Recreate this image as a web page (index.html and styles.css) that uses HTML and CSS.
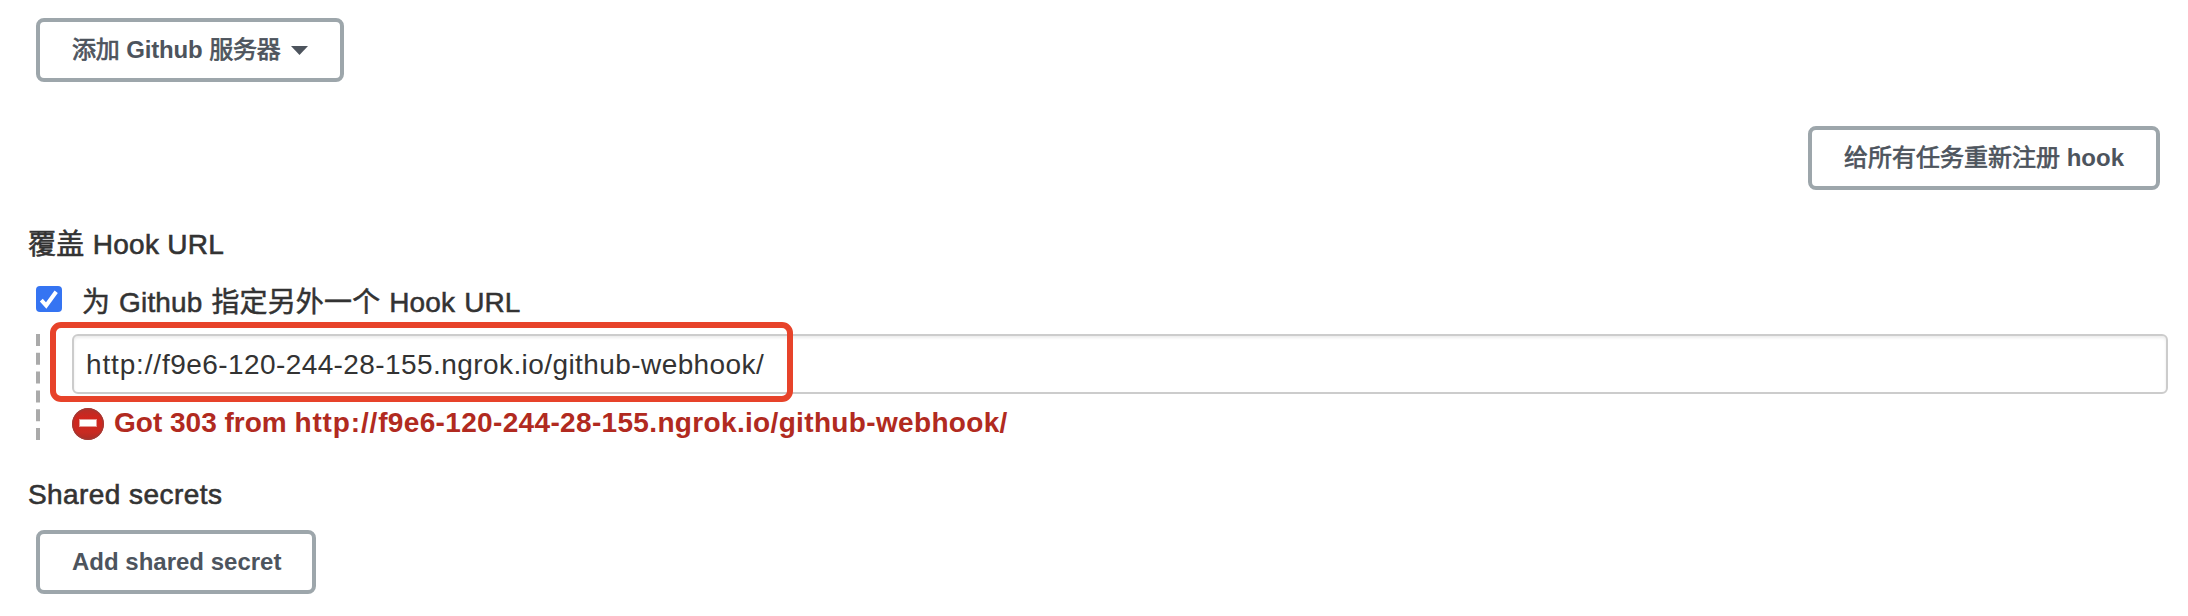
FILE: index.html
```
<!DOCTYPE html>
<html lang="zh-CN">
<head>
<meta charset="utf-8">
<title>Github Hook</title>
<link rel="stylesheet" href="styles.css">
</head>
<body>
<main class="config">
  <div class="row">
    <button class="btn btn-menu" type="button"><span><span class="han">添加</span> Github <span class="han">服务器</span></span><svg class="caret" viewBox="0 0 17 9"><path d="M0 0h17L8.5 9z"/></svg></button>
  </div>
  <div class="row row-end">
    <button class="btn btn-hook" type="button"><span><span class="han">给所有任务重新注册</span> hook</span></button>
  </div>
  <h2 class="title"><span>覆盖 Hook URL</span></h2>
  <label class="check">
    <svg class="box" viewBox="0 0 26 26"><rect width="26" height="26" rx="4"/><path d="M5.3 14.2l4.9 5.3L20.2 5.8"/></svg>
    <span class="check-text">为 Github 指定另外一个 Hook URL</span>
  </label>
  <section class="nested">
    <svg class="guide" viewBox="0 0 4 106"><path d="M2 0v106"/></svg>
    <div class="fields">
      <div class="field"><span class="url"><span class="scheme">http://</span>f9e6-120-244-28-155.ngrok.io/github-webhook/</span></div>
      <div class="error">
        <svg class="stop" viewBox="0 0 32 32">
          <defs><linearGradient id="red" x1="0" y1="0" x2="0" y2="1"><stop offset="0" stop-color="#b23029"/><stop offset=".3" stop-color="#d0251d"/><stop offset=".75" stop-color="#c92a22"/><stop offset="1" stop-color="#a92d27"/></linearGradient></defs>
          <circle cx="16" cy="16" r="16" fill="url(#red)"/>
          <circle cx="16" cy="16" r="15.2" fill="none" stroke="#a13a35" stroke-width="1.2"/>
          <rect x="7.5" y="11.5" width="17" height="7" fill="#fff" stroke="#e59b96"/>
        </svg>
        <span class="error-text">Got 303 from <span class="error-url"><span class="scheme">http://</span>f9e6-120-244-28-155.ngrok.io/github-webhook/</span></span>
      </div>
    </div>
    <div class="highlight"></div>
  </section>
  <h2 class="title title-secrets"><span>Shared secrets</span></h2>
  <div class="row">
    <button class="btn btn-secret" type="button"><span>Add shared secret</span></button>
  </div>
</main>
</body>
</html>
```
FILE: styles.css
```
* { box-sizing: border-box; }
body {
  margin: 0;
  background: #fff;
  color: #333;
  font: 28px/40px "Liberation Sans", "Noto Sans CJK SC", sans-serif;
}
.config {
  display: flex;
  flex-direction: column;
  height: 616px;
  padding: 18px 20px 0 28px;
  overflow: hidden;
}
.row { display: flex; padding-left: 8px; }
.row-end { justify-content: flex-end; padding: 44px 8px 0 0; }
.btn {
  display: flex;
  align-items: center;
  height: 64px;
  padding: 0 0 0 32px;
  border: 4px solid #9da6ab;
  border-radius: 8px;
  background: #fff;
  color: #4d545d;
  font: bold 24px/32px "Liberation Sans", "Noto Sans CJK SC", sans-serif;
  white-space: nowrap;
}
.han { font-weight: 400; -webkit-text-stroke: 0.7px #4d545d; }
.btn-menu { width: 308px; letter-spacing: -0.15px; }
.btn-hook { width: 352px; }
.btn-secret { width: 280px; }
.caret { width: 17px; height: 9px; margin-left: 10px; fill: #4d545d; }
.title {
  height: 40px;
  margin: 35px 0 0;
  font-size: 28px;
  font-weight: 400;
  line-height: 40px;
  letter-spacing: 0.3px;
  white-space: nowrap;
  -webkit-text-stroke: 0.6px #333;
}
.check {
  display: flex;
  align-items: center;
  height: 40px;
  margin-top: 17px;
  padding-left: 8px;
  white-space: nowrap;
}
.box { width: 26px; height: 26px; margin: 0 20px 6px 0; fill: #3574f2; }
.box path { fill: none; stroke: #fff; stroke-width: 4; }
.check-text {
  padding-top: 2px;
  letter-spacing: 0.15px;
  word-spacing: 1px;
  -webkit-text-stroke: 0.5px #333;
}
.nested {
  position: relative;
  display: flex;
  gap: 32px;
  height: 106px;
  margin-top: 12px;
  padding-left: 8px;
}
.guide { flex: none; width: 4px; height: 106px; }
.guide path { stroke: #aaa; stroke-width: 4; stroke-dasharray: 12 6.8; }
.fields { flex: 1; }
.field {
  display: flex;
  align-items: center;
  height: 60px;
  padding: 2px 12px 0;
  border: 2px solid #ccc;
  border-radius: 6px;
  box-shadow: inset 0 2px 3px rgba(0, 0, 0, 0.08);
}
.url { letter-spacing: 0.42px; }
.error {
  display: flex;
  align-items: center;
  gap: 10px;
  height: 32px;
  margin-top: 14px;
  color: #b12a20;
  font-weight: bold;
  white-space: nowrap;
}
.error-text { padding-bottom: 2px; }
.error-url { letter-spacing: 0.34px; }
.scheme { letter-spacing: 0.85px; }
.stop { width: 32px; height: 32px; }
.highlight {
  position: absolute;
  top: -12px;
  left: 22px;
  width: 743px;
  height: 80px;
  border: 6px solid #e7432a;
  border-radius: 11px;
}
.title-secrets { margin: 34px 0 16px; padding-top: 1px; letter-spacing: 0.43px; }
```
